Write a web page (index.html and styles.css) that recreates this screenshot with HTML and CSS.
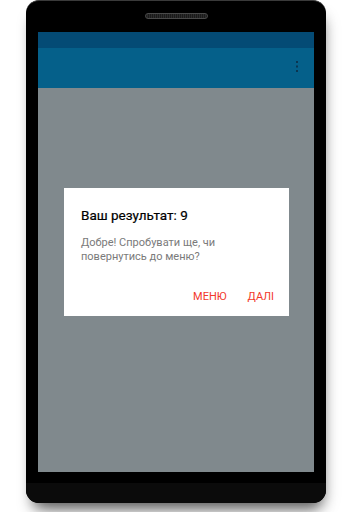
FILE: index.html
```html
<!DOCTYPE html>
<html lang="uk">
<head>
<meta charset="utf-8">
<title>Результат</title>
<link rel="stylesheet" href="styles.css">
</head>
<body>
<div class="phone">
  <div class="bezel-top">
    <div class="speaker"></div>
  </div>
  <div class="screen">
    <div class="status-bar"></div>
    <div class="toolbar">
      <svg class="overflow" width="4" height="12" viewBox="0 0 4 12" aria-hidden="true">
        <rect x="1" y="0" width="2" height="2" fill="#0b3550"/>
        <rect x="1" y="4.5" width="2" height="2" fill="#0b3550"/>
        <rect x="1" y="9" width="2" height="2" fill="#0b3550"/>
      </svg>
    </div>
    <div class="content">
      <div class="dialog">
        <div class="dialog-title">Ваш результат: 9</div>
        <div class="dialog-text">Добре! Спробувати ще, чи повернутись до меню?</div>
        <div class="dialog-actions">
          <span class="btn">МЕНЮ</span>
          <span class="btn">ДАЛІ</span>
        </div>
      </div>
    </div>
  </div>
  <div class="chin"></div>
</div>
</body>
</html>
```

FILE: styles.css
```css
html, body {
  margin: 0;
  padding: 0;
  background: #ffffff;
  font-family: Roboto, "Noto Sans", "Liberation Sans", sans-serif;
}

body {
  width: 352px;
  height: 512px;
  overflow: hidden;
}

.phone {
  margin-left: 26px;
  width: 300px;
  height: 503px;
  background: #000000;
  border-radius: 13px;
  border-top: 1px solid #3a3a3a;
  box-sizing: border-box;
  display: flex;
  flex-direction: column;
  align-items: center;
  box-shadow: 0 12px 14px -6px rgba(0, 0, 0, 0.5), 6px 10px 16px -8px rgba(0, 0, 0, 0.35);
  overflow: hidden;
}

.bezel-top {
  height: 31px;
  width: 100%;
  display: flex;
  justify-content: center;
  padding-top: 12px;
  box-sizing: border-box;
}

.speaker {
  width: 63px;
  height: 6px;
  border-radius: 3px;
  border: 1px solid #4a4a4a;
  box-sizing: border-box;
  background: repeating-linear-gradient(90deg, #1a1a1a 0 1px, #2c2c2c 1px 2px);
}

.screen {
  width: 276px;
  height: 440px;
  display: flex;
  flex-direction: column;
}

.status-bar {
  height: 16px;
  background: #044b75;
}

.toolbar {
  height: 40px;
  background: #05608a;
  display: flex;
  align-items: center;
  justify-content: flex-end;
  padding-right: 15px;
}

.overflow {
  display: block;
  margin-top: -2px;
}

.content {
  flex: 1;
  background: #80898d;
  display: flex;
  align-items: center;
  justify-content: center;
  padding-bottom: 56px;
  padding-left: 1px;
}

.dialog {
  width: 225px;
  height: 128px;
  background: #ffffff;
  box-sizing: border-box;
  padding: 19px 15px 0 17px;
  display: flex;
  flex-direction: column;
}

.dialog-title {
  font-size: 13.5px;
  line-height: 16px;
  color: #000000;
  -webkit-text-stroke: 0.2px #000000;
}

.dialog-text {
  margin-top: 13px;
  font-size: 11px;
  line-height: 14px;
  color: #7a7a7a;
}

.dialog-actions {
  margin-top: 26px;
  display: flex;
  justify-content: flex-end;
  gap: 21px;
}

.btn {
  font-size: 11px;
  line-height: 14px;
  color: #f2382a;
}

.chin {
  flex: 1;
  width: 100%;
  margin-top: 11px;
  background: #0b0b0b;
}
```
